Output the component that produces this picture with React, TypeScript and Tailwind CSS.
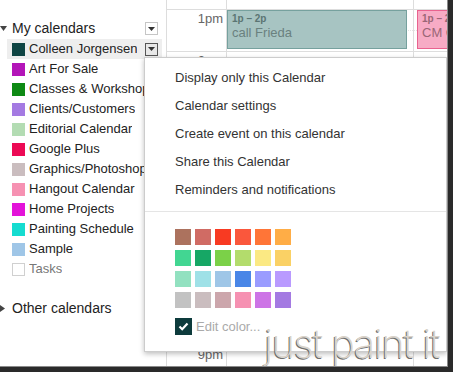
import React from 'react';

const calendars = [
  { name: 'Colleen Jorgensen', color: '#0f4544', active: true },
  { name: 'Art For Sale', color: '#b315b8' },
  { name: 'Classes & Workshops', color: '#0e8a14' },
  { name: 'Clients/Customers', color: '#a47ae2' },
  { name: 'Editorial Calendar', color: '#b3dcb3' },
  { name: 'Google Plus', color: '#ec0a55' },
  { name: 'Graphics/Photoshop', color: '#cabdbf' },
  { name: 'Hangout Calendar', color: '#f691b2' },
  { name: 'Home Projects', color: '#e313d9' },
  { name: 'Painting Schedule', color: '#15dcd0' },
  { name: 'Sample', color: '#9fc6e7' },
  { name: 'Tasks', color: '#ffffff', muted: true },
];

const menuItems = [
  'Display only this Calendar',
  'Calendar settings',
  'Create event on this calendar',
  'Share this Calendar',
  'Reminders and notifications',
];

const palette = [
  '#ac725e', '#d06b64', '#f83a22', '#fa573c', '#ff7537', '#ffad46',
  '#42d692', '#16a765', '#7bd148', '#b3dc6c', '#fbe983', '#fad165',
  '#92e1c0', '#9fe1e7', '#9fc6e7', '#4986e7', '#9a9cff', '#b99aff',
  '#c2c2c2', '#cabdbf', '#cca6ac', '#f691b2', '#cd74e6', '#a47ae2',
];

const hours = ['1pm', '2pm', '3pm', '4pm', '5pm', '6pm', '7pm', '8pm', '9pm'];

const DropButton = ({ active }: { active?: boolean }) => (
  <div
    className={`w-[13px] h-[13px] shrink-0 flex items-center justify-center border ${
      active ? 'border-[#555] bg-[#e8e8e8]' : 'border-[#c6c6c6] bg-white'
    }`}
  >
    <svg width="7" height="4" viewBox="0 0 7 4">
      <polygon points="0,0 7,0 3.5,4" fill="#333" />
    </svg>
  </div>
);

const Sidebar = () => (
  <div className="w-[166px] shrink-0 pt-[18px] text-[13px] text-[#222]">
    <div className="h-[21px] flex items-center">
      <svg width="7" height="5" viewBox="0 0 7 5" className="mr-[5px]">
        <polygon points="0,0 7,0 3.5,5" fill="#444" />
      </svg>
      <span className="text-[14px] flex-1">My calendars</span>
      <div className="mr-[8px]">
        <DropButton />
      </div>
    </div>
    {calendars.map((c) => (
      <div
        key={c.name}
        className={`ml-[7px] w-[155px] h-[20px] flex items-center pl-[5px] pr-[4px] ${
          c.active ? 'bg-[#eeeeee]' : ''
        }`}
      >
        <div
          className={`w-[13px] h-[13px] shrink-0 ${c.muted ? 'border border-[#d0d0d0]' : ''}`}
          style={{ backgroundColor: c.color }}
        />
        {/* names run under the open menu, so clip them at its edge */}
        <span
          className={`ml-[4px] max-w-[115px] overflow-hidden whitespace-nowrap ${
            c.muted ? 'text-[#777]' : ''
          }`}
        >
          {c.name}
        </span>
        <div className="flex-1" />
        {c.active && <DropButton active />}
      </div>
    ))}
    <div className="h-[20px] mt-[19px] flex items-center">
      <svg width="5" height="7" viewBox="0 0 5 7" className="mr-[7px]">
        <polygon points="0,0 5,3.5 0,7" fill="#444" />
      </svg>
      <span className="text-[14px]">Other calendars</span>
    </div>
  </div>
);

const HourRow = ({ label }: { label: string }) => (
  <div className="h-[42px] grid grid-cols-[59px_187px_1fr] border-t border-[#dddddd]">
    <div className="text-right pr-[3px] pt-[1px] text-[13px] leading-[15px] text-[#666]">{label}</div>
    <div className="relative border-l border-[#dddddd]">
      <div className="h-[21px] border-b border-dotted border-[#e4e4e4]" />
      {label === '1pm' && (
        <div className="absolute left-0 top-0 w-[180px] h-[39px] bg-[#a7c4c2] border border-[#76a19e] pl-[4px] pt-[2px] overflow-hidden">
          <div className="text-[10px] font-bold leading-[12px] text-[#5b7573]">1p – 2p</div>
          <div className="text-[13px] leading-[15px] text-[#6a817f]">call Frieda</div>
        </div>
      )}
    </div>
    <div className="relative border-l border-[#dddddd] overflow-hidden">
      <div className="h-[21px] border-b border-dotted border-[#e4e4e4]" />
      {label === '1pm' && (
        <div className="absolute left-[3px] top-0 w-[40px] h-[39px] bg-[#f7abc5] border border-[#e9628f] pl-[4px] pt-[2px] overflow-hidden whitespace-nowrap">
          <div className="text-[10px] font-bold leading-[12px] text-[#9a6676]">1p – 2p</div>
          <div className="text-[13px] leading-[15px] text-[#9a6676]">CM Class</div>
        </div>
      )}
    </div>
  </div>
);

const Grid = () => (
  <div className="flex-1 border-l border-[#dddddd]">
    <div className="h-[9px] grid grid-cols-[59px_187px_1fr]">
      <div />
      <div className="border-l border-[#dddddd]" />
      <div className="border-l border-[#dddddd]" />
    </div>
    {hours.map((h) => (
      <HourRow key={h} label={h} />
    ))}
  </div>
);

const Menu = () => (
  <div className="absolute left-[144px] top-[57px] w-[303px] h-[295px] bg-white border border-[#cccccc] shadow-[0_2px_5px_rgba(0,0,0,0.25)] pt-[6px]">
    {menuItems.map((m) => (
      <div key={m} className="h-[28px] flex items-center pl-[30px] text-[13px] text-[#333]">
        {m}
      </div>
    ))}
    <div className="mt-[7px] border-t border-[#e5e5e5]" />
    <div className="mt-[17px] pl-[30px] grid grid-cols-[repeat(6,16px)] gap-x-[4px] gap-y-[5px]">
      {palette.map((c, i) => (
        <div key={i} className="w-[16px] h-[16px]" style={{ backgroundColor: c }} />
      ))}
    </div>
    <div className="mt-[9px] pl-[30px] flex items-center">
      <div className="w-[17px] h-[17px] bg-[#0d3b3c] flex items-center justify-center">
        <svg width="11" height="9" viewBox="0 0 11 9">
          <polyline points="1.5,4.5 4.2,7.2 9.5,1.5" fill="none" stroke="#fff" strokeWidth="2.2" />
        </svg>
      </div>
      <span className="ml-[4px] text-[13px] text-[#aaa]">Edit color...</span>
    </div>
  </div>
);

export default function App() {
  return (
    <div
      className="w-[453px] h-[372px] bg-[#2a2a2a] overflow-hidden"
      style={{ fontFamily: '"Liberation Sans", Arial, sans-serif' }}
    >
      <div className="relative w-[448px] h-[367px] bg-white border-r border-b border-[#8a8a8a] overflow-hidden flex">
        <Sidebar />
        <Grid />
        <Menu />
        <div
          className="absolute left-[264px] top-[324px] text-[40px] leading-[40px] tracking-[-1.5px] text-[#d9d3ca] font-extralight whitespace-nowrap [text-shadow:-1px_1px_0_#6f6f6f]"
          style={{ fontFamily: 'Inter, "DejaVu Sans", sans-serif' }}
        >
          just paint it
        </div>
      </div>
    </div>
  );
}
